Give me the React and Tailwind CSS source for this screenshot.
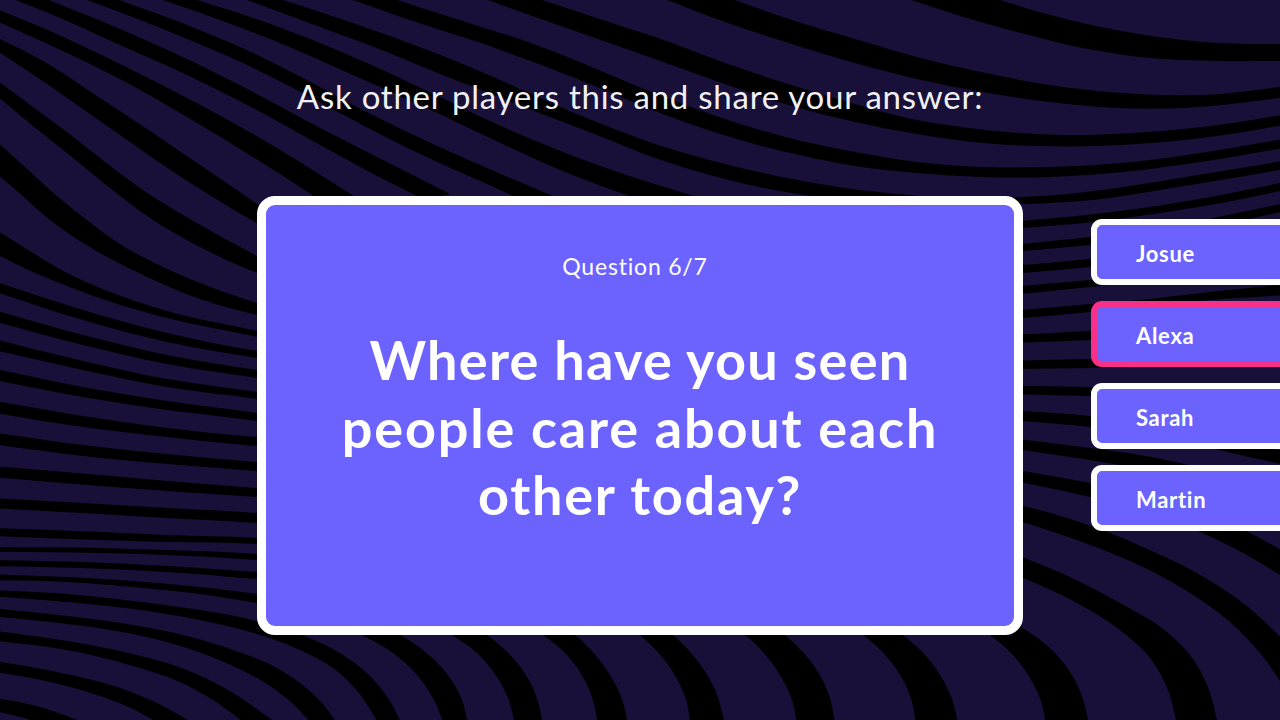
import React from "react";

// Each band is a pair of edges, given as flat x,y lists.
const BANDS = [
  ["1000,0 1050,15 1133,33 1183,40 1233,43.5 1290,44", "905,-2 967,18 1017,32 1083,48 1150,58 1217,61 1290,61"],
  ["729,-2 792,20 855,39 917,57 990,74 1063,87 1137,94 1203,95 1290,86", "662,-2 725,22 792,44 855,63 917,79 983,92 1050,102 1117,108 1183,108 1290,97"],
  ["536,-2 612,23 672,43 725,63 788,84 855,104 907,118 977,129 1063,135 1133,133 1203,127 1290,114", "482,-2 558,25 638,53 708,78 775,101 855,122 917,134 983,143 1063,146.5 1137,144 1217,136 1290,124"],
  ["391,-2 425,9 475,25 525,41 575,60 620,79 680,103 725,119 785,137 855,152 917,162 983,167 1050,167 1133,162 1200,153 1290,138", "347,-2 425,25 475,41 525,59 575,78 612,93 655,111 708,130 758,145 808,157 855,166 917,173 983,177 1050,177 1133,171 1200,162 1290,147"],
  ["277,-2 320,12 387,35 453,60 507,83 565,109 612,128 658,145 725,164 792,179 860,190 940,197 1023,197 1077,193 1143,184 1210,173 1290,160", "242,-2 320,27 387,52 440,74 492,94 542,114 592,133 658,159 725,179 798,194 900,203 1023,204 1093,200 1160,190 1227,179 1290,168"],
  ["191,-2 253,18 320,43 387,72 440,97 492,122 548,146 592,163 642,180 700,198", "157,-2 220,20 287,46 353,75 433,111 492,139 535,159 575,176 640,200"],
  ["114,-2 187,25 253,53 303,78 353,105 420,138 487,168 560,199", "82,-2 130,16 187,39 243,63 297,90 353,120 420,154 487,184 520,199"],
  ["44,-2 120,29 187,59 253,92 320,128 387,162 450,194", "11,-2 67,21 120,45 187,75 253,108 320,145 387,181 425,200"],
  ["-10,6 50,31 120,64 187,98 253,134 303,164 357,198", "-10,18 50,45 120,79 187,117 253,157 317,198"],
  ["-10,34 50,65 100,98 150,131 200,165 257,204 270,213", "-10,46 50,86 100,121 150,156 200,189 257,223 270,230"],
  ["-10,75 33,107 67,132 100,158 143,190 195,222 257,256 270,263", "-10,90 33,126 67,153 110,188 153,220 200,247 257,273 270,278"],
  ["-10,135 25,167 50,190 83,217 120,244 167,269 213,288 257,303 270,307", "-10,168 17,191 50,220 93,249 143,275 200,299 257,315 270,318"],
  ["-10,226 33,253 67,273 105,290 167,311 257,331 270,334", "-10,251 33,272 67,286 105,300 167,318 257,337 270,340"],
  ["-10,280 83,310 167,333 257,351 270,353", "-10,290 83,320 167,342 257,358 270,360"],
  ["-10,309 83,335 167,355 257,370 270,372", "-10,320 83,345 167,364 257,378 270,380"],
  ["-10,338 83,361 167,379 257,392 270,394", "-10,349 83,370 167,387 257,399 270,401"],
  ["-10,368 83,387 167,401 257,413 270,415", "-10,379 83,397 167,410 257,421 270,423"],
  ["-10,400 83,416 167,428 257,437 270,438", "-10,412 83,427 167,437 257,446 270,447"],
  ["-10,432 83,445 167,454 257,462 270,463", "-10,444 83,456 167,464 257,471 270,472"],
  ["-10,466 100,475 167,481 257,488 270,489", "-10,477 100,486 167,491 257,497 270,498"],
  ["-10,498 100,504 167,508 257,513 270,514", "-10,508 100,514 167,518 257,523 270,524"],
  ["-10,528 100,532 167,535 257,538 270,539", "-10,536 100,540 167,542 257,544 270,545"],
  ["-10,547 100,548 167,550 257,554 270,555", "-10,552 100,553 167,555 257,560 270,561"],
  ["-10,560 83,562 167,566 257,572 270,573", "-10,566 83,568 167,572 257,579 270,580"],
  ["-10,574 67,577 133,581 200,587 257,594 270,596", "-10,580 67,582 133,587 200,594 257,603 270,605"],
  ["-10,590 67,594 133,601 200,610 257,621 307,637 343,655 370,676 388,698 402,724", "-10,596 67,602 133,609 200,620 257,634 300,650 333,668 359,693 379,724"],
  ["-10,608 67,616 133,625 187,636 233,650 273,666 300,683 322,703 338,724", "-10,616 67,624 133,634 187,648 233,666 267,684 293,704 312,724"],
  ["-10,630 67,641 133,654 187,670 233,693 275,722", "-10,640 67,650 133,666 180,682 213,700 246,724"],
  ["-10,660 57,672 117,687 157,703 195,724", "-10,671 50,682 100,696 133,709 160,724"],
  ["-10,697 40,707 75,719 88,724", "-10,710 27,719 44,725"],
  ["390,630 400,635 430,656 450,678 462,700 468,724", "352,630 362,635 393,653 417,675 433,698 444,724"],
  ["480,630 487,635 513,658 530,682 538,702 543,724", "444,630 452,635 477,653 497,677 508,698 515,724"],
  ["568,630 575,635 597,657 613,680 623,702 628,724", "536,630 543,635 567,655 583,677 593,700 598,724"],
  ["667,630 673,635 700,664 716,692 725,724", "634,630 640,635 663,658 679,683 687,703 690,724"],
  ["779,630 785,635 808,658 823,681 831,702 835,724", "738,630 745,635 768,658 784,682 793,703 797,724"],
  ["897,630 903,635 927,657 943,680 953,702 958,724", "856,630 863,635 887,657 903,680 912,702 916,724"],
  ["1005,617 1023,628 1053,651 1072,675 1083,699 1089,724", "983,630 990,635 1013,655 1030,678 1041,701 1046,724"],
  ["1010,552 1070,577 1120,603 1167,632 1193,659 1209,690 1218,724", "1010,572 1077,603 1120,630 1150,658 1168,690 1177,724"],
  ["1010,502 1070,519 1110,533 1143,547 1193,571 1243,603 1290,646", "1010,518 1077,540 1143,567 1190,593 1230,622 1260,653 1290,696"],
  ["1010,469 1090,483 1150,497 1200,512 1250,533 1290,555", "1010,480 1090,497 1140,511 1200,532 1245,554 1290,581"],
  ["1010,438 1090,448 1140,455 1180,463 1240,480", "1010,448 1090,460 1130,467 1180,478 1240,495"],
  ["1010,410 1090,416 1180,430 1240,443 1290,452", "1010,420 1090,427 1180,441 1240,455 1290,466"],
  ["1010,386 1090,387 1180,390", "1010,394 1090,396 1180,399"],
  ["1010,361 1090,359 1180,358", "1010,369 1090,368 1180,366"],
  ["1010,335 1090,331 1180,325", "1010,343 1090,340 1180,335"],
  ["1010,311 1090,304 1150,299 1210,292 1290,284", "1010,319 1090,312 1150,305 1210,300 1290,295"],
  ["1010,287 1090,280 1180,270", "1010,295 1090,287 1180,278"],
  ["1010,266 1090,259 1180,248", "1010,274 1090,267 1180,255"],
  ["1010,245 1090,237 1160,228 1223,216 1290,202", "1010,252 1090,245 1160,236 1230,223 1290,210"],
  ["1010,222 1077,216 1143,208 1210,197 1290,181", "1010,229 1093,222 1160,213 1227,202 1290,189"],
];

const parse = (list) => list.split(" ").map((p) => p.split(",").map(Number));
const dist = (a, b) => Math.hypot(a[0] - b[0], a[1] - b[1]);

// Unit-speed tangent at point i, weighted by the lengths of the neighbouring chords.
function tangent(pts, i) {
  const p = pts[i];
  const prev = pts[i - 1];
  const next = pts[i + 1];
  if (!prev || !next) {
    const [a, b] = prev ? [prev, p] : [p, next];
    const d = dist(a, b);
    return [(b[0] - a[0]) / d, (b[1] - a[1]) / d];
  }
  const d1 = dist(prev, p);
  const d2 = dist(p, next);
  return [0, 1].map((k) => (((p[k] - prev[k]) / d1) * d2 + ((next[k] - p[k]) / d2) * d1) / (d1 + d2));
}

// Smooth curve through the points, written as cubic Bezier segments.
function curve(pts) {
  let d = "";
  for (let i = 0; i < pts.length - 1; i++) {
    const a = pts[i];
    const b = pts[i + 1];
    const s = dist(a, b) / 3;
    const ta = tangent(pts, i);
    const tb = tangent(pts, i + 1);
    d += `C${a[0] + ta[0] * s} ${a[1] + ta[1] * s} ${b[0] - tb[0] * s} ${b[1] - tb[1] * s} ${b[0]} ${b[1]}`;
  }
  return d;
}

function bandPath([a, b]) {
  const top = parse(a);
  const bottom = parse(b).reverse();
  return `M${top[0]}${curve(top)}L${bottom[0]}${curve(bottom)}Z`;
}

function Waves() {
  return (
    <svg className="absolute inset-0 h-full w-full" viewBox="0 0 1280 720" fill="#000" aria-hidden="true">
      {BANDS.map((band, i) => (
        <path key={i} d={bandPath(band)} />
      ))}
    </svg>
  );
}

const PLAYERS = [
  { name: "Josue" },
  { name: "Alexa", active: true },
  { name: "Sarah" },
  { name: "Martin" },
];

function Player({ name, active }) {
  return (
    <li
      className={`flex h-[66px] items-center rounded-l-[11px] border-6 border-r-0 bg-[#6c63ff] pl-[39px] pt-[3px] text-[22px] font-bold tracking-[0.7px] ${
        active ? "border-[#f9308a]" : "border-white"
      }`}
    >
      {name}
    </li>
  );
}

export default function App() {
  return (
    <div className="relative h-[720px] w-[1280px] overflow-hidden bg-[#181038] font-['Lato',sans-serif] text-white">
      <Waves />
      <div className="relative flex h-full flex-col">
        <header className="flex h-[196px] justify-center pt-[76px]">
          <p className="text-[33px] leading-[40px] tracking-[0.75px] whitespace-nowrap text-[#f1f0f4]">
            Ask other players this and share your answer:
          </p>
        </header>
        <div className="flex items-start pl-[257px]">
          <main className="flex h-[439px] w-[766px] shrink-0 flex-col items-center rounded-[18px] border-9 border-white bg-[#6c63ff]">
            <p className="mt-[46px] mr-[10px] text-[23px] leading-[30px] tracking-[0.8px]">Question 6/7</p>
            <h1 className="mt-[45px] text-center text-[54px] leading-[67.5px] font-bold whitespace-nowrap">
              <span className="block tracking-[1.3px]">Where have you seen</span>
              <span className="block tracking-[1.8px]">people care about each</span>
              <span className="block tracking-[1.7px]">other today?</span>
            </h1>
          </main>
          <ul className="mt-[23px] ml-[68px] flex flex-1 flex-col gap-4">
            {PLAYERS.map((p) => (
              <Player key={p.name} {...p} />
            ))}
          </ul>
        </div>
      </div>
    </div>
  );
}
